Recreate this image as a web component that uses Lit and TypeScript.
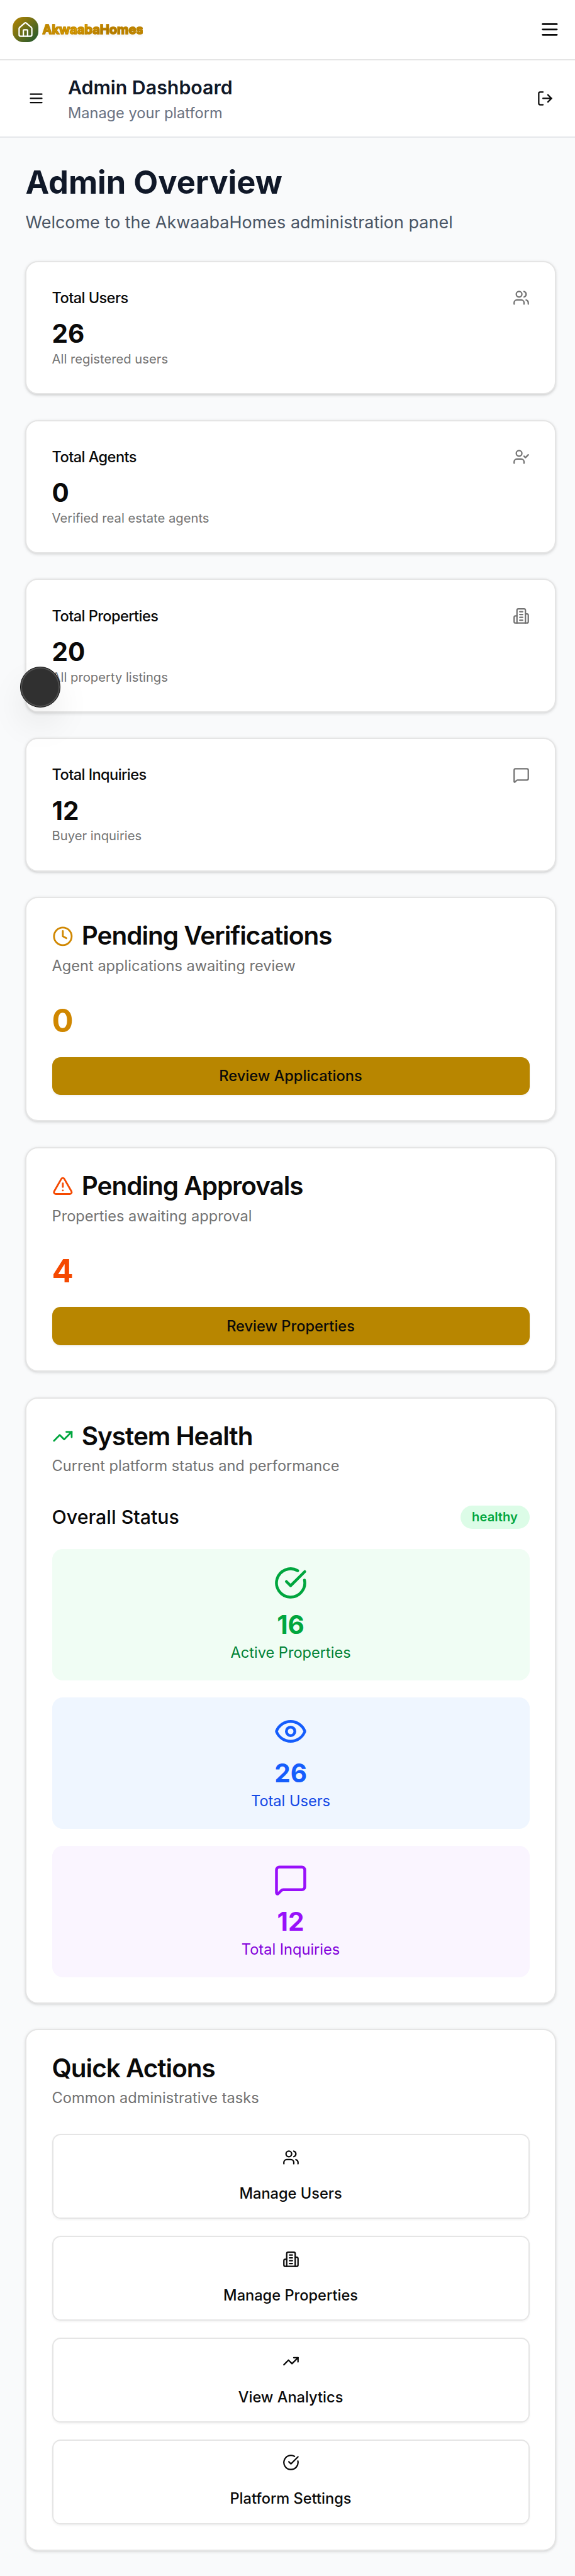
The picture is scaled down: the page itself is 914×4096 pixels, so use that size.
import { LitElement, html, css, svg } from "lit";
import { customElement, property } from "lit/decorators.js";

const ICONS: Record<string, unknown> = {
  menu: svg`<path d="M4 12h16M4 18h16M4 6h16"/>`,
  house: svg`<path d="M15 21v-8a1 1 0 0 0-1-1h-4a1 1 0 0 0-1 1v8"/><path d="M3 10a2 2 0 0 1 .709-1.528l7-5.999a2 2 0 0 1 2.582 0l7 5.999A2 2 0 0 1 21 10v9a2 2 0 0 1-2 2H5a2 2 0 0 1-2-2z"/>`,
  logout: svg`<path d="m16 17 5-5-5-5"/><path d="M21 12H9"/><path d="M9 21H5a2 2 0 0 1-2-2V5a2 2 0 0 1 2-2h4"/>`,
  users: svg`<path d="M16 21v-2a4 4 0 0 0-4-4H6a4 4 0 0 0-4 4v2"/><path d="M16 3.128a4 4 0 0 1 0 7.744"/><path d="M22 21v-2a4 4 0 0 0-3-3.87"/><circle cx="9" cy="7" r="4"/>`,
  userCheck: svg`<path d="m16 11 2 2 4-4"/><path d="M16 21v-2a4 4 0 0 0-4-4H6a4 4 0 0 0-4 4v2"/><circle cx="9" cy="7" r="4"/>`,
  building: svg`<path d="M6 22V4a2 2 0 0 1 2-2h8a2 2 0 0 1 2 2v18Z"/><path d="M6 12H4a2 2 0 0 0-2 2v6a2 2 0 0 0 2 2h2"/><path d="M18 9h2a2 2 0 0 1 2 2v9a2 2 0 0 1-2 2h-2"/><path d="M10 6h4M10 10h4M10 14h4M10 18h4"/>`,
  message: svg`<path d="M22 17a2 2 0 0 1-2 2H6.828a2 2 0 0 0-1.414.586l-2.202 2.202A.71.71 0 0 1 2 21.286V5a2 2 0 0 1 2-2h16a2 2 0 0 1 2 2z"/>`,
  clock: svg`<circle cx="12" cy="12" r="10"/><path d="M12 6v6l4 2"/>`,
  alert: svg`<path d="m21.73 18-8-14a2 2 0 0 0-3.48 0l-8 14A2 2 0 0 0 4 21h16a2 2 0 0 0 1.73-3"/><path d="M12 9v4"/><path d="M12 17h.01"/>`,
  trending: svg`<path d="M16 7h6v6"/><path d="m22 7-8.5 8.5-5-5L2 17"/>`,
  check: svg`<path d="M21.801 10A10 10 0 1 1 17 3.335"/><path d="m9 11 3 3L22 4"/>`,
  eye: svg`<path d="M2.062 12.348a1 1 0 0 1 0-.696 10.75 10.75 0 0 1 19.876 0 1 1 0 0 1 0 .696 10.75 10.75 0 0 1-19.876 0"/><circle cx="12" cy="12" r="3"/>`,
};

@customElement("ui-icon")
export class UiIcon extends LitElement {
  @property() name = "";
  static styles = css`
    :host { display: block; width: 16px; height: 16px; flex: none; }
    svg { display: block; width: 100%; height: 100%; }
  `;
  render() {
    return html`<svg viewBox="0 0 24 24" fill="none" stroke="currentColor" stroke-width="2" stroke-linecap="round" stroke-linejoin="round">${ICONS[this.name]}</svg>`;
  }
}

const STATS = [
  { title: "Total Users", value: "26", note: "All registered users", icon: "users" },
  { title: "Total Agents", value: "0", note: "Verified real estate agents", icon: "userCheck" },
  { title: "Total Properties", value: "20", note: "All property listings", icon: "building" },
  { title: "Total Inquiries", value: "12", note: "Buyer inquiries", icon: "message" },
];
const PENDING = [
  { title: "Pending Verifications", value: "0", note: "Agent applications awaiting review", action: "Review Applications", icon: "clock", tone: "yellow" },
  { title: "Pending Approvals", value: "4", note: "Properties awaiting approval", action: "Review Properties", icon: "alert", tone: "orange" },
];
const HEALTH = [
  { value: "16", label: "Active Properties", icon: "check", tone: "green" },
  { value: "26", label: "Total Users", icon: "eye", tone: "blue" },
  { value: "12", label: "Total Inquiries", icon: "message", tone: "purple" },
];
const ACTIONS = [
  { label: "Manage Users", icon: "users" },
  { label: "Manage Properties", icon: "building" },
  { label: "View Analytics", icon: "trending" },
  { label: "Platform Settings", icon: "check" },
];

@customElement("app-root")
export class AppRoot extends LitElement {
  static styles = css`
    :host {
      display: block; position: relative; width: 542.1px; height: 2429.4px; overflow: hidden;
      zoom: 1.686; background: #f9fafb; color: #0a0a0a;
      font-family: Inter, "Liberation Sans", sans-serif; font-size: 16px; line-height: 24px;
    }
    * { box-sizing: border-box; margin: 0; }
    .topbar { display: flex; align-items: center; justify-content: space-between; height: 57px; padding: 0 14px 0 12px; background: #fff; border-bottom: 1.2px solid #e5e5e5; }
    .brand { display: flex; align-items: center; gap: 4px; }
    .logo { display: grid; place-items: center; width: 24px; height: 24px; border-radius: 10px; color: #fff; background: linear-gradient(135deg, #b88600, #1a5632); }
    .logo ui-icon { width: 16px; height: 16px; }
    .brandname { overflow: hidden; width: 94.4px; white-space: nowrap; font-size: 12px; line-height: 16px; font-weight: 700; letter-spacing: -0.06px; color: transparent; background: linear-gradient(135deg, #b88600 0%, #f0b000 35%, #b07800 62%, #c89000 100%); -webkit-background-clip: text; background-clip: text; -webkit-text-stroke: 0.8px rgba(192, 132, 0, 0.85); text-shadow: 0 2px 4px rgba(0, 0, 0, 0.1); }
    .i20 { width: 20px; height: 20px; }
    .i32 { width: 32px; height: 32px; }
    .subbar { display: flex; align-items: center; height: 73px; padding: 0 20px 0 26px; background: #fff; border-bottom: 1.2px solid #e5e7eb; }
    .subtitle { flex: 1; padding-left: 22px; }
    .subtitle h1 { font-size: 18px; line-height: 28px; font-weight: 600; color: #101828; }
    .subtitle p { font-size: 14px; line-height: 20px; color: #6a7282; }
    main { display: flex; flex-direction: column; gap: 24px; padding: 24px 18px 24px 24px; }
    .intro h2 { font-size: 30px; line-height: 36px; font-weight: 700; color: #101828; }
    .intro p { margin-top: 8px; color: #4a5565; }
    .card { background: #fff; border: 1.2px solid #e5e5e5; border-radius: 12px; padding: 23.8px; box-shadow: 0 1px 3px rgba(0,0,0,.1), 0 1px 2px -1px rgba(0,0,0,.1); }
    .stathead { display: flex; align-items: center; justify-content: space-between; height: 20px; margin-bottom: 8px; }
    .stathead h3 { font-size: 14px; line-height: 20px; font-weight: 500; letter-spacing: -0.35px; }
    .stathead ui-icon { color: #737373; }
    .num { font-size: 24px; line-height: 32px; font-weight: 700; }
    .small { font-size: 12px; line-height: 16px; color: #737373; }
    .title { display: flex; align-items: center; gap: 8px; font-size: 24px; line-height: 24px; font-weight: 600; letter-spacing: -0.6px; }
    .desc { margin-top: 6px; font-size: 14px; line-height: 20px; color: #737373; }
    .big { margin-top: 24px; font-size: 30px; line-height: 36px; font-weight: 700; }
    .yellow { color: #d08700; }
    .orange { color: #f54900; }
    .green { color: #00a63e; }
    .blue { color: #155dfc; }
    .purple { color: #9810fa; }
    .primary { display: flex; align-items: center; justify-content: center; width: 100%; height: 36px; margin-top: 16px; border-radius: 8px; background: #b88600; font-size: 14px; line-height: 20px; font-weight: 500; box-shadow: 0 1px 2px rgba(0,0,0,.05); }
    .status { display: flex; align-items: center; justify-content: space-between; height: 28px; margin-top: 24px; font-size: 18px; line-height: 28px; font-weight: 500; }
    .badge { padding: 3px 11px; border-radius: 11px; background: #dcfce7; color: #00a63e; font-size: 12px; line-height: 16px; font-weight: 600; }
    .tiles { display: flex; flex-direction: column; gap: 16px; margin-top: 16px; }
    .tile { display: flex; flex-direction: column; align-items: center; height: 124px; padding-top: 16px; border-radius: 10px; }
    .tile .num { margin-top: 8px; }
    .tile p { font-size: 14px; line-height: 20px; }
    .tile.green { background: #f0fdf4; }
    .tile.green p { color: #008236; }
    .tile.blue { background: #eff6ff; }
    .tile.blue p { color: #1447e6; }
    .tile.purple { background: #faf5ff; }
    .tile.purple p { color: #8200db; }
    .actions { display: flex; flex-direction: column; gap: 16px; margin-top: 24px; }
    .action { display: flex; flex-direction: column; align-items: center; justify-content: center; gap: 16px; height: 80px; border: 1.2px solid #e5e5e5; border-radius: 8px; font-size: 14px; line-height: 20px; font-weight: 500; box-shadow: 0 1px 2px rgba(0,0,0,.05); }
    .fab { position: absolute; left: 19px; top: 629px; width: 38px; height: 38px; border-radius: 50%; background: #303030; border: 1px solid #111; box-shadow: inset 0 0 0 1.2px #505050, 0 16px 32px rgba(0,0,0,.08); }
  `;
  render() {
    return html`
      <header class="topbar">
        <div class="brand"><span class="logo"><ui-icon name="house"></ui-icon></span><span class="brandname">AkwaabaHomes</span></div>
        <ui-icon class="i20" name="menu"></ui-icon>
      </header>
      <div class="subbar">
        <ui-icon name="menu"></ui-icon>
        <div class="subtitle"><h1>Admin Dashboard</h1><p>Manage your platform</p></div>
        <ui-icon name="logout"></ui-icon>
      </div>
      <main>
        <div class="intro"><h2>Admin Overview</h2><p>Welcome to the AkwaabaHomes administration panel</p></div>
        ${STATS.map((s) => html`<section class="card">
          <div class="stathead"><h3>${s.title}</h3><ui-icon name=${s.icon}></ui-icon></div>
          <div class="num">${s.value}</div><p class="small">${s.note}</p>
        </section>`)}
        ${PENDING.map((p) => html`<section class="card">
          <h3 class="title"><ui-icon class="i20 ${p.tone}" name=${p.icon}></ui-icon>${p.title}</h3>
          <p class="desc">${p.note}</p>
          <div class="big ${p.tone}">${p.value}</div>
          <div class="primary">${p.action}</div>
        </section>`)}
        <section class="card">
          <h3 class="title"><ui-icon class="i20 green" name="trending"></ui-icon>System Health</h3>
          <p class="desc">Current platform status and performance</p>
          <div class="status"><span>Overall Status</span><span class="badge">healthy</span></div>
          <div class="tiles">${HEALTH.map((h) => html`<div class="tile ${h.tone}">
            <ui-icon class="i32" name=${h.icon}></ui-icon><div class="num">${h.value}</div><p>${h.label}</p>
          </div>`)}</div>
        </section>
        <section class="card">
          <h3 class="title">Quick Actions</h3>
          <p class="desc">Common administrative tasks</p>
          <div class="actions">${ACTIONS.map((a) => html`<div class="action"><ui-icon name=${a.icon}></ui-icon><span>${a.label}</span></div>`)}</div>
        </section>
      </main>
      <div class="fab"></div>
    `;
  }
}
